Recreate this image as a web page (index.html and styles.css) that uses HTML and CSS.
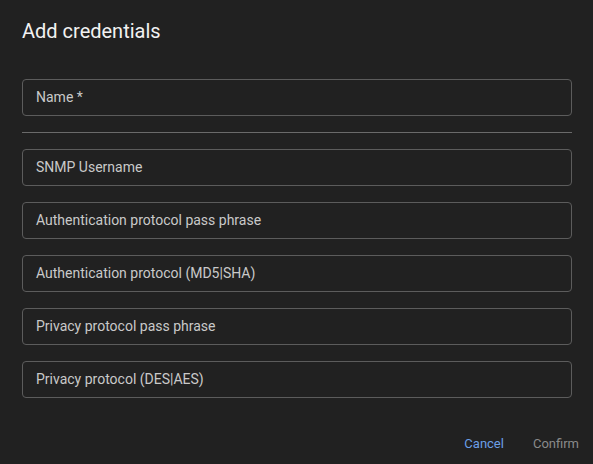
FILE: index.html
```html
<!DOCTYPE html>
<html>
<head>
<meta charset="utf-8">
<link rel="stylesheet" href="styles.css">
</head>
<body>
<div class="dialog">
  <h2 class="title">Add credentials</h2>
  <div class="content">
    <div class="field">Name *</div>
    <div class="divider"></div>
    <div class="field">SNMP Username</div>
    <div class="field">Authentication protocol pass phrase</div>
    <div class="field">Authentication protocol (MD5|SHA)</div>
    <div class="field">Privacy protocol pass phrase</div>
    <div class="field">Privacy protocol (DES|AES)</div>
  </div>
  <div class="actions">
    <button class="btn primary">Cancel</button>
    <button class="btn disabled">Confirm</button>
  </div>
</div>
</body>
</html>
```
FILE: styles.css
```css
html, body {
  margin: 0;
  padding: 0;
  background: #212121;
}
.dialog {
  width: 593px;
  height: 464px;
  box-sizing: border-box;
  font-family: Roboto, "Liberation Sans", sans-serif;
}
.title {
  margin: 0;
  padding: 15px 22px 0;
  font-size: 20px;
  line-height: 32px;
  font-weight: 400;
  color: #f2f2f2;
}
.content {
  padding: 32px 21px 0 22px;
  display: flex;
  flex-direction: column;
  gap: 16px;
}
.field {
  height: 37px;
  box-sizing: border-box;
  border: 1px solid #5c5c5c;
  border-radius: 4px;
  padding: 0 13px 1px;
  display: flex;
  align-items: center;
  font-size: 14px;
  color: #c9c9c9;
}
.divider {
  height: 1px;
  background: #6a6a6a;
}
.actions {
  display: flex;
  justify-content: flex-end;
  gap: 13px;
  padding: 27px 6px 0 0;
}
.btn {
  background: none;
  border: none;
  font-family: Roboto, "Liberation Sans", sans-serif;
  font-size: 13px;
  height: 36px;
  padding: 0 8px;
  cursor: pointer;
}
.primary {
  color: #6b9fe6;
}
.disabled {
  color: #8a8a8a;
}
```
